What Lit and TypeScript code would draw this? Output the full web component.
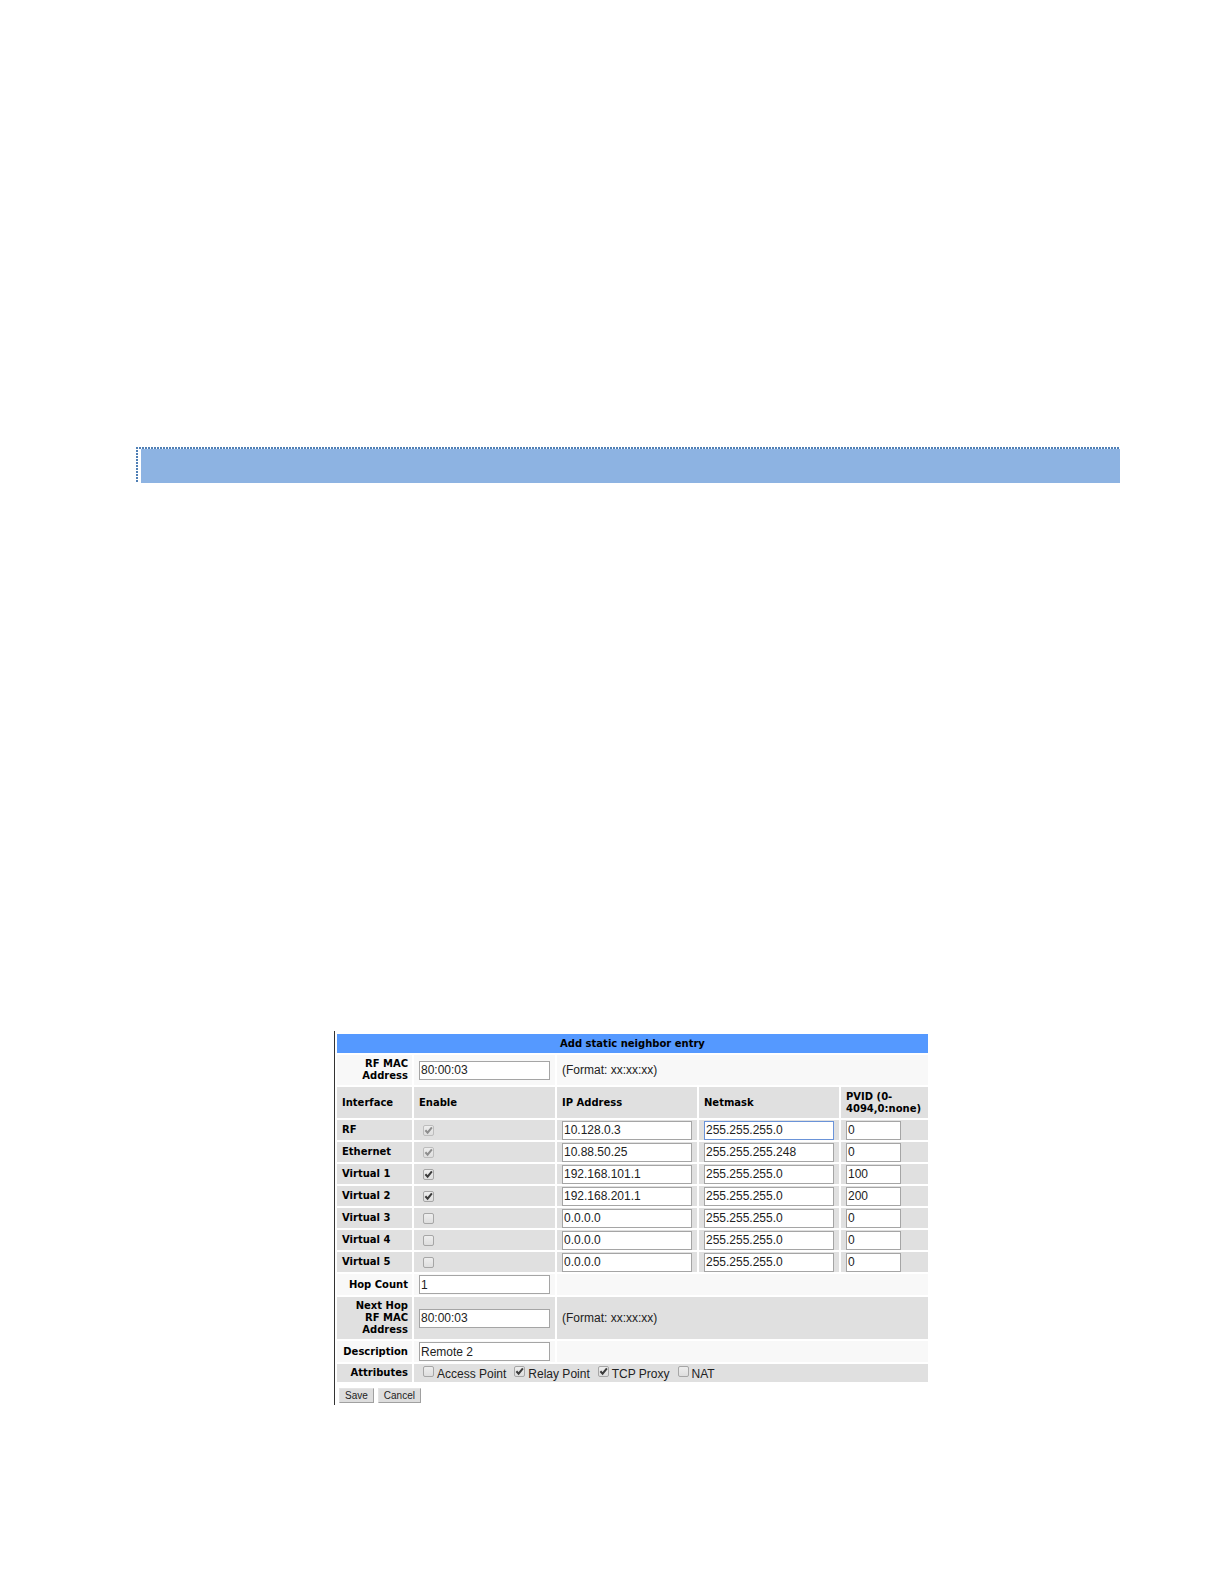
import { LitElement, html, css, nothing } from "lit";
import { customElement, state } from "lit/decorators.js";

interface InterfaceRow {
  name: string;
  enabled: boolean;
  locked: boolean;
  ip: string;
  mask: string;
  pvid: string;
}

const INTERFACES: InterfaceRow[] = [
  { name: "RF", enabled: true, locked: true, ip: "10.128.0.3", mask: "255.255.255.0", pvid: "0" },
  { name: "Ethernet", enabled: true, locked: true, ip: "10.88.50.25", mask: "255.255.255.248", pvid: "0" },
  { name: "Virtual 1", enabled: true, locked: false, ip: "192.168.101.1", mask: "255.255.255.0", pvid: "100" },
  { name: "Virtual 2", enabled: true, locked: false, ip: "192.168.201.1", mask: "255.255.255.0", pvid: "200" },
  { name: "Virtual 3", enabled: false, locked: false, ip: "0.0.0.0", mask: "255.255.255.0", pvid: "0" },
  { name: "Virtual 4", enabled: false, locked: false, ip: "0.0.0.0", mask: "255.255.255.0", pvid: "0" },
  { name: "Virtual 5", enabled: false, locked: false, ip: "0.0.0.0", mask: "255.255.255.0", pvid: "0" },
];

const ATTRIBUTES = [
  { name: "Access Point", on: false },
  { name: "Relay Point", on: true },
  { name: "TCP Proxy", on: true },
  { name: "NAT", on: false },
];

@customElement("tick-box")
class TickBox extends LitElement {
  static properties = {
    checked: { type: Boolean },
    disabled: { type: Boolean },
    label: { type: String },
    caption: { type: Boolean },
  };
  declare checked: boolean;
  declare disabled: boolean;
  declare label: string;
  declare caption: boolean;

  static styles = css`
    :host {
      display: flex;
    }
    .wrap {
      display: flex;
      align-items: flex-start;
      gap: 3px;
    }
    .box {
      display: grid;
      width: 11px;
      height: 11px;
    }
    .text {
      padding-top: 1px;
    }
    .input,
    .mark {
      grid-area: 1 / 1;
    }
    .input {
      appearance: none;
      box-sizing: border-box;
      width: 11px;
      height: 11px;
      margin: 0;
      border: 1px solid #a6a6a6;
      border-radius: 2px;
      background: linear-gradient(#eeeeee, #dedede);
    }
    .input:disabled {
      border-color: #bdbdbd;
    }
    .mark {
      width: 11px;
      height: 11px;
      pointer-events: none;
      fill: none;
      stroke: #3c3c3c;
      stroke-width: 2;
    }
    .input:disabled + .mark {
      stroke: #8e8e8e;
    }
  `;

  private toggle(e: Event) {
    this.checked = (e.target as HTMLInputElement).checked;
  }

  render() {
    return html`<label class="wrap">
      <span class="box">
        <input
          class="input"
          type="checkbox"
          aria-label=${this.label}
          .checked=${this.checked}
          ?disabled=${this.disabled}
          @change=${this.toggle}
        />
        ${this.checked
          ? html`<svg class="mark" viewBox="0 0 11 11" aria-hidden="true"><path d="M2.4 5.2 L4.6 7.6 L8.9 2.3" /></svg>`
          : nothing}
      </span>
      ${this.caption ? html`<span class="text">${this.label}</span>` : nothing}
    </label>`;
  }
}

@customElement("app-root")
class AppRoot extends LitElement {
  @state() rows = INTERFACES;

  static styles = css`
    :host {
      display: block;
      background: #ffffff;
      color: #222222;
      font: 12px/14px "Liberation Sans", Arial, sans-serif;
    }
    .page {
      padding: 447px 104px 179px 136px;
    }
    .band {
      padding: 2px 0 0 5px;
      background:
        repeating-linear-gradient(90deg, #4f7fb5 0 2px, #ffffff 2px 3px) 0 0 / 100% 2px no-repeat,
        repeating-linear-gradient(180deg, #4f7fb5 0 2px, #ffffff 2px 3px) 0 0 / 2px 100% no-repeat;
    }
    .fill {
      height: 34px;
      background: #8db3e2;
    }
    .figure {
      display: flex;
      justify-content: center;
      padding: 548px 0 0 8px;
    }
    .panel {
      border-left: 1px solid #333333;
      padding: 1px 0 2px;
    }
    .grid {
      border-spacing: 2px;
      table-layout: fixed;
      width: 595px;
    }
    .c1 { width: 75px; }
    .c2 { width: 141px; }
    .c3 { width: 140px; }
    .c5 { width: 87px; }
    th,
    td {
      box-sizing: border-box;
      height: 20px;
      padding: 0 5px;
      background: #e0e0e0;
      text-align: left;
      vertical-align: middle;
    }
    th {
      font: bold 10px/12px "DejaVu Sans", Verdana, sans-serif;
      color: #000000;
    }
    .title th {
      height: 19px;
      background: #5599ff;
      text-align: center;
    }
    .light th,
    .light td {
      background: #f8f8f8;
    }
    th.side {
      padding-right: 4px;
      text-align: right;
    }
    .mac > * { height: 30px; }
    .heads > * { height: 31px; }
    .line > * { height: 21px; }
    .next > * { height: 42px; }
    .attrs > * { height: 18px; }
    .field {
      display: block;
      box-sizing: border-box;
      width: 100%;
      height: 19px;
      margin: 0;
      padding: 0 1px;
      border: 1px solid #a5a5a5;
      background: #ffffff;
      color: #222222;
      font: inherit;
      outline: none;
    }
    .short {
      width: 55px;
    }
    .active {
      border-color: #6a93d8;
    }
    .tick {
      padding-left: 4px;
    }
    .options {
      display: flex;
      gap: 8px;
      padding-left: 4px;
    }
    .actions {
      display: flex;
      gap: 4px;
      padding: 4px 4px 0;
    }
    .button {
      height: 15px;
      padding: 0 5px;
      border: 1px solid;
      border-color: #e4e4e4 #a0a0a0 #a0a0a0 #e4e4e4;
      background: #dddddd;
      color: #222222;
      font: 10px/12px "Liberation Sans", Arial, sans-serif;
    }
  `;

  private field(label: string, value: string, extra = "") {
    return html`<input class="field ${extra}" type="text" aria-label=${label} .value=${value} />`;
  }

  render() {
    return html`<main class="page">
      <div class="band"><div class="fill"></div></div>
      <div class="figure">
        <form class="panel" @submit=${(e: Event) => e.preventDefault()}>
          <table class="grid">
            <colgroup>
              <col class="c1" /><col class="c2" /><col class="c3" /><col class="c3" /><col class="c5" />
            </colgroup>
            <tbody>
              <tr class="title"><th colspan="5">Add static neighbor entry</th></tr>
              <tr class="mac light">
                <th class="side" scope="row">RF MAC Address</th>
                <td>${this.field("RF MAC Address", "80:00:03")}</td>
                <td colspan="3">(Format: xx:xx:xx)</td>
              </tr>
              <tr class="heads">
                <th scope="col">Interface</th>
                <th scope="col">Enable</th>
                <th scope="col">IP Address</th>
                <th scope="col">Netmask</th>
                <th scope="col">PVID (0-4094,0:none)</th>
              </tr>
              ${this.rows.map(
                (r, i) => html`<tr>
                  <th scope="row">${r.name}</th>
                  <td>
                    <tick-box class="tick" .label=${"Enable " + r.name} .checked=${r.enabled} .disabled=${r.locked}></tick-box>
                  </td>
                  <td>${this.field(r.name + " IP Address", r.ip)}</td>
                  <td>${this.field(r.name + " Netmask", r.mask, i === 0 ? "active" : "")}</td>
                  <td>${this.field(r.name + " PVID", r.pvid, "short")}</td>
                </tr>`
              )}
              <tr class="line light">
                <th class="side" scope="row">Hop Count</th>
                <td>${this.field("Hop Count", "1")}</td>
                <td colspan="3"></td>
              </tr>
              <tr class="next">
                <th class="side" scope="row">Next Hop RF MAC Address</th>
                <td>${this.field("Next Hop RF MAC Address", "80:00:03")}</td>
                <td colspan="3">(Format: xx:xx:xx)</td>
              </tr>
              <tr class="line light">
                <th class="side" scope="row">Description</th>
                <td>${this.field("Description", "Remote 2")}</td>
                <td colspan="3"></td>
              </tr>
              <tr class="attrs">
                <th class="side" scope="row">Attributes</th>
                <td colspan="4">
                  <div class="options">
                    ${ATTRIBUTES.map(
                      (a) => html`<tick-box .caption=${true} .label=${a.name} .checked=${a.on}></tick-box>`
                    )}
                  </div>
                </td>
              </tr>
            </tbody>
          </table>
          <div class="actions">
            <button class="button" type="submit">Save</button>
            <button class="button" type="button">Cancel</button>
          </div>
        </form>
      </div>
    </main>`;
  }
}
